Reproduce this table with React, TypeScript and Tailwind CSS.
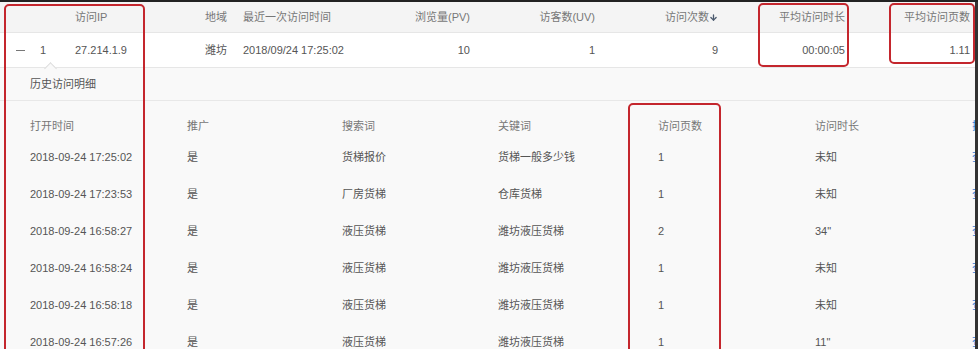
import { ArrowDown } from "lucide-react";

const subRows = [
  ["2018-09-24 17:25:02", "是", "货梯报价", "货梯一般多少钱", "1", "未知"],
  ["2018-09-24 17:23:53", "是", "厂房货梯", "仓库货梯", "1", "未知"],
  ["2018-09-24 16:58:27", "是", "液压货梯", "潍坊液压货梯", "2", "34\""],
  ["2018-09-24 16:58:24", "是", "液压货梯", "潍坊液压货梯", "1", "未知"],
  ["2018-09-24 16:58:18", "是", "液压货梯", "潍坊液压货梯", "1", "未知"],
  ["2018-09-24 16:57:26", "是", "液压货梯", "潍坊液压货梯", "1", "11\""],
];

const subCols = ["w-[157px]", "w-[155px]", "w-[156px]", "w-[160px]", "w-[157px]", "w-[157px]"];

const App = () => {
  return (
    <div
      className="relative w-[978px] h-[349px] overflow-hidden bg-[#f9f9f9] text-[11px] text-[#555]"
      style={{ fontFamily: '"Liberation Sans", "Noto Sans CJK SC", sans-serif' }}
    >
      <div className="h-[2px] bg-[#222]" />

      <div className="flex h-full">
        <div className="w-[975px] shrink-0 flex flex-col overflow-hidden">
          {/* 表头 */}
          <div className="shrink-0 flex items-center h-[31px] bg-[#f4f4f4] border-b border-[#e6e6e6] text-[#777]">
            <div className="w-[75px] shrink-0" />
            <div className="w-[130px] shrink-0">访问IP</div>
            <div className="w-[38px] shrink-0">地域</div>
            <div className="w-[130px] shrink-0">最近一次访问时间</div>
            <div className="w-[97px] shrink-0 text-right">浏览量(PV)</div>
            <div className="w-[125px] shrink-0 text-right">访客数(UV)</div>
            <div className="w-[123px] shrink-0 flex justify-end items-center">
              访问次数
              <ArrowDown size={9} strokeWidth={3.5} className="text-[#4b5a6e]" />
            </div>
            <div className="w-[127px] shrink-0 text-right">平均访问时长</div>
            <div className="w-[125px] shrink-0 text-right">平均访问页数</div>
          </div>

          {/* 数据行 */}
          <div className="shrink-0 flex items-center h-[35px] bg-white border-b border-[#e6e6e6]">
            <div className="w-[75px] shrink-0 flex items-center">
              <span className="ml-[16px] w-[9px] h-px bg-[#777]" />
              <span className="ml-[15px]">1</span>
            </div>
            <div className="w-[130px] shrink-0">27.214.1.9</div>
            <div className="w-[38px] shrink-0">潍坊</div>
            <div className="w-[130px] shrink-0 whitespace-nowrap">2018/09/24 17:25:02</div>
            <div className="w-[97px] shrink-0 text-right">10</div>
            <div className="w-[125px] shrink-0 text-right">1</div>
            <div className="w-[123px] shrink-0 text-right">9</div>
            <div className="w-[127px] shrink-0 text-right">00:00:05</div>
            <div className="w-[125px] shrink-0 text-right">1.11</div>
          </div>

          {/* 历史访问明细 */}
          <div className="shrink-0 flex items-center h-[33px] pl-[30px] border-b border-[#e8e8e8]">历史访问明细</div>

          <div className="shrink-0 flex items-center h-[26px] mt-[12px] pl-[30px] text-[#777]">
            {["打开时间", "推广", "搜索词", "关键词", "访问页数", "访问时长"].map((h, i) => (
              <div key={h} className={`${subCols[i]} shrink-0`}>
                {h}
              </div>
            ))}
            <div className="shrink-0 text-[#2d7bd6] whitespace-nowrap">操作</div>
          </div>

          {subRows.map((r, idx) => (
            <div key={idx} className="shrink-0 flex items-center h-[37px] pl-[30px]">
              {r.map((c, i) => (
                <div key={i} className={`${subCols[i]} shrink-0 whitespace-nowrap`}>
                  {c}
                </div>
              ))}
              <div className="shrink-0 text-[#2d7bd6] whitespace-nowrap">查看</div>
            </div>
          ))}
        </div>
        <div className="w-[3px] shrink-0 bg-[#333]" />
      </div>

      {/* 展开箭头 */}
      <div className="absolute left-[46px] top-[64px] w-[9px] h-[9px] rotate-45 bg-[#f9f9f9] border-l border-t border-[#dcdcdc]" />

      {/* 标注框 */}
      <div className="absolute left-[4px] top-[4px] w-[141px] h-[360px] border-[2.5px] border-[#c4262d] rounded-[5px]" />
      <div className="absolute left-[758px] top-[3px] w-[91px] h-[64px] border-[2.5px] border-[#c4262d] rounded-[5px]" />
      <div className="absolute left-[889px] top-[3px] w-[86px] h-[61px] border-[2.5px] border-[#c4262d] rounded-[5px]" />
      <div className="absolute left-[628px] top-[103px] w-[93px] h-[260px] border-[2.5px] border-[#c4262d] rounded-[5px]" />
    </div>
  );
};

export default App;
